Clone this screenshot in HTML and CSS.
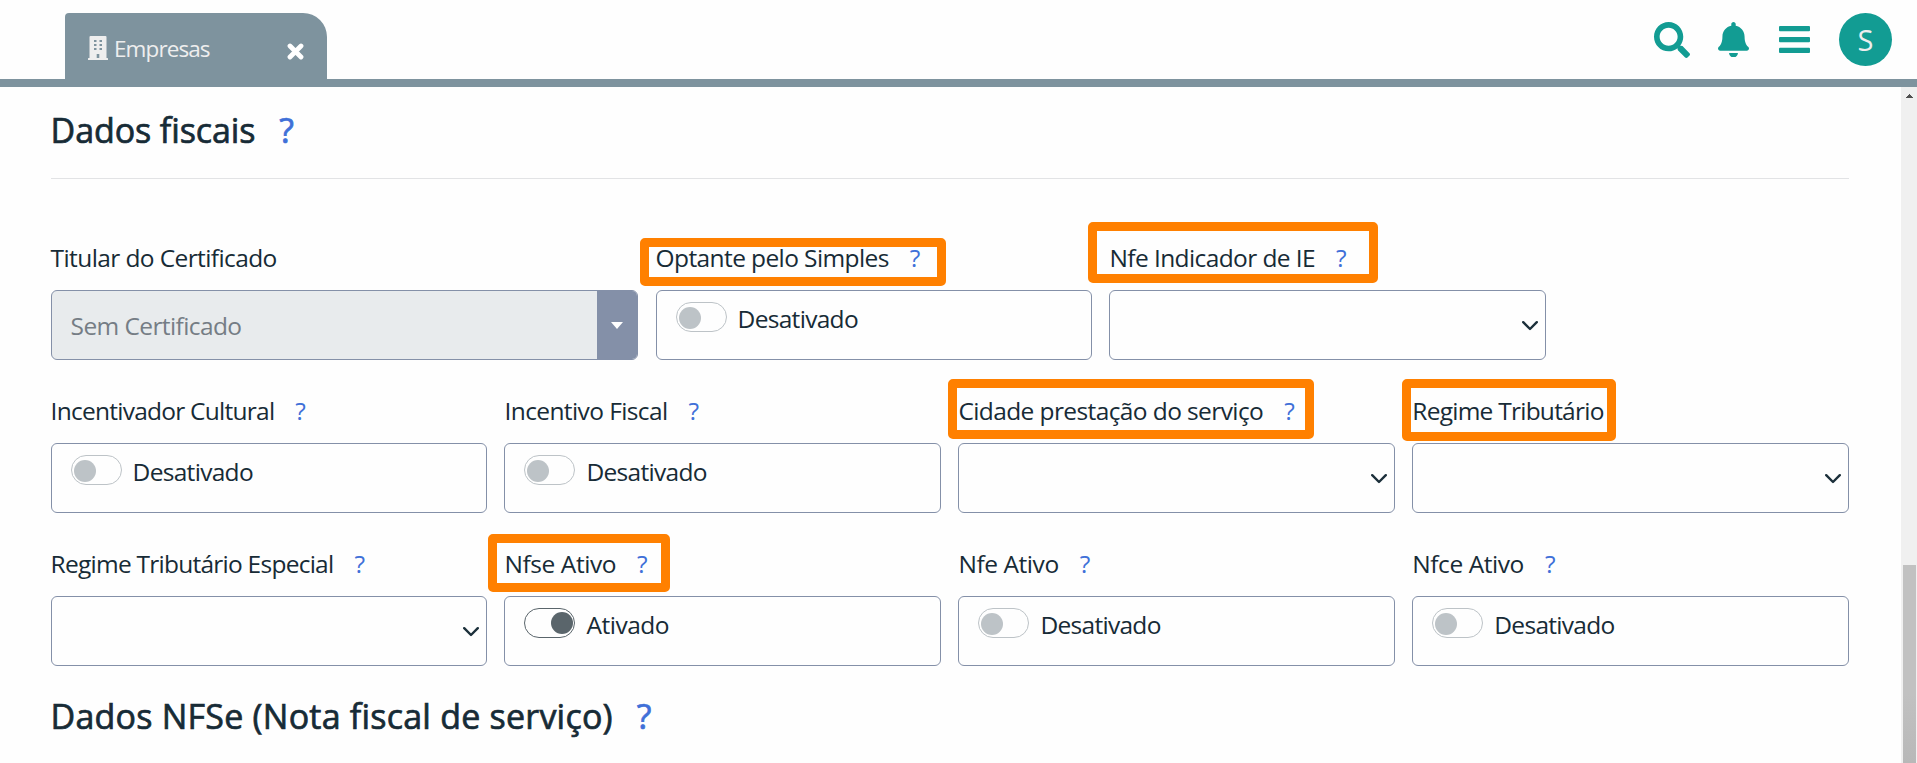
FILE: index.html
```html
<!DOCTYPE html>
<html lang="pt-BR">
<head>
<meta charset="utf-8">
<title>Empresas</title>
<link rel="stylesheet" href="styles.css">
</head>
<body>
<header class="topbar">
  <div class="tab">
    <svg class="tab-icon" viewBox="0 0 20 24"><path fill="#eee" fill-rule="evenodd" d="M1.500 1Q1.500 0 2.500 0H17.500Q18.500 0 18.500 1V22H19.500Q20 22 20 22.600V24H0V22.600Q0 22 .5 22H1.500ZM6 4v2h2.500V4ZM11.500 4v2H14V4ZM6 8v2h2.500V8ZM11.500 8v2H14V8ZM6 12v2h2.500v-2ZM11.500 12v2H14v-2ZM8.700 18v4h2.600v-4Z"/></svg>
    <span class="tab-title">Empresas</span>
    <svg class="tab-close" viewBox="0 0 17 17"><path d="M3 3L14 14M14 3L3 14" stroke="#fff" stroke-width="4.800" stroke-linecap="round"/></svg>
  </div>
  <nav class="actions">
    <svg class="ic-search" viewBox="0 0 512 512"><path fill="currentColor" d="M505 442.700L405.300 343c-4.500-4.500-10.600-7-17-7H372c27.600-35.300 44-79.700 44-128C416 93.100 322.900 0 208 0S0 93.100 0 208s93.100 208 208 208c48.300 0 92.700-16.400 128-44v16.300c0 6.400 2.500 12.500 7 17l99.700 99.700c9.400 9.400 24.600 9.400 33.900 0l28.300-28.300c9.400-9.400 9.400-24.600.1-34zM208 336c-70.700 0-128-57.200-128-128 0-70.700 57.200-128 128-128 70.700 0 128 57.200 128 128 0 70.700-57.200 128-128 128z"/></svg>
    <svg class="ic-bell" viewBox="0 0 448 512"><path fill="currentColor" d="M224 512c35.320 0 63.970-28.650 63.970-64H160.030c0 35.350 28.650 64 63.970 64zm215.390-149.710c-19.320-20.760-55.470-51.990-55.470-154.290 0-77.700-54.480-139.900-127.940-155.160V32c0-17.670-14.320-32-31.980-32s-31.980 14.330-31.980 32v20.840C118.560 68.100 64.080 130.300 64.080 208c0 102.300-36.150 133.530-55.470 154.290-6 6.450-8.660 14.160-8.610 21.710.11 16.400 12.980 32 32.100 32h383.800c19.120 0 32-15.600 32.100-32 .05-7.550-2.610-15.270-8.610-21.710z"/></svg>
    <svg class="ic-bars" viewBox="0 0 31 27"><g fill="currentColor"><rect width="31" height="5.300" rx="1"/><rect y="11" width="31" height="5.300" rx="1"/><rect y="21.800" width="31" height="5.200" rx="1"/></g></svg>
    <span class="avatar">S</span>
  </nav>
</header>
<div class="view">
  <main class="content">
    <h2 class="section-title"><span>Dados fiscais</span><span class="help">?</span></h2>
    <hr class="rule">
    <div class="row">
      <div class="field wide">
        <div class="label"><span>Titular do Certificado</span></div>
        <div class="box disabled"><span class="placeholder">Sem Certificado</span><span class="drop"><svg viewBox="0 0 12 7"><path d="M0 0H12L6 7Z" fill="#fff"/></svg></span></div>
      </div>
      <div class="field">
        <div class="label"><span>Optante pelo Simples</span><span class="help">?</span><i class="mark m-optante"></i></div>
        <div class="box"><span class="switch"></span><span class="state">Desativado</span></div>
      </div>
      <div class="field">
        <div class="label"><span>Nfe Indicador de IE</span><span class="help">?</span><i class="mark m-ie"></i></div>
        <div class="box select"><svg viewBox="0 0 16 10"><path d="M1.200 1.200L8 8L14.800 1.200"/></svg></div>
      </div>
    </div>
    <div class="row">
      <div class="field">
        <div class="label tight"><span>Incentivador Cultural</span><span class="help">?</span></div>
        <div class="box"><span class="switch"></span><span class="state">Desativado</span></div>
      </div>
      <div class="field">
        <div class="label"><span>Incentivo Fiscal</span><span class="help">?</span></div>
        <div class="box"><span class="switch"></span><span class="state">Desativado</span></div>
      </div>
      <div class="field">
        <div class="label"><span>Cidade prestação do serviço</span><span class="help">?</span><i class="mark m-cidade"></i></div>
        <div class="box select"><svg viewBox="0 0 16 10"><path d="M1.200 1.200L8 8L14.800 1.200"/></svg></div>
      </div>
      <div class="field">
        <div class="label tight"><span>Regime Tributário</span><i class="mark m-regime"></i></div>
        <div class="box select"><svg viewBox="0 0 16 10"><path d="M1.200 1.200L8 8L14.800 1.200"/></svg></div>
      </div>
    </div>
    <div class="row">
      <div class="field">
        <div class="label tight"><span>Regime Tributário Especial</span><span class="help">?</span></div>
        <div class="box select"><svg viewBox="0 0 16 10"><path d="M1.200 1.200L8 8L14.800 1.200"/></svg></div>
      </div>
      <div class="field">
        <div class="label loose"><span>Nfse Ativo</span><span class="help">?</span><i class="mark m-nfse"></i></div>
        <div class="box"><span class="switch on"></span><span class="state on">Ativado</span></div>
      </div>
      <div class="field">
        <div class="label loose"><span>Nfe Ativo</span><span class="help">?</span></div>
        <div class="box"><span class="switch"></span><span class="state">Desativado</span></div>
      </div>
      <div class="field">
        <div class="label loose"><span>Nfce Ativo</span><span class="help">?</span></div>
        <div class="box"><span class="switch"></span><span class="state">Desativado</span></div>
      </div>
    </div>
    <h2 class="section-title second"><span>Dados NFSe (Nota fiscal de serviço)</span><span class="help">?</span></h2>
  </main>
  <aside class="scrollbar"><svg class="up" viewBox="0 0 7 4"><path d="M3 0H4V1H5V2H6V3H7V4H0V3H1V2H2V1H3Z" fill="#505050"/></svg><div class="thumb"></div></aside>
</div>
</body>
</html>
```
FILE: styles.css
```css
* { box-sizing: border-box; }
body {
  margin: 0;
  height: 763px;
  overflow: hidden;
  background: #fefefe;
  color: #172b36;
  font-family: "Open Sans", "Noto Sans", sans-serif;
}
.topbar {
  height: 87px;
  padding: 13px 25px 0 65px;
  border-bottom: 8px solid #7e939e;
  display: flex;
  justify-content: space-between;
}
.tab {
  width: 262px;
  height: 66px;
  padding: 0 23px;
  border-radius: 4px 24px 0 0;
  background: #7e939e;
  display: flex;
  align-items: center;
}
.tab-icon { width: 20px; height: 24px; margin-top: 4px; }
.tab-title {
  flex: 1;
  margin: 6px 0 0 6px;
  color: #eee;
  font-size: 22.500px;
  letter-spacing: -0.9px;
  line-height: 30px;
}
.tab-close { width: 17px; height: 17px; margin-top: 10px; fill: none; }
.actions { height: 53px; display: flex; align-items: center; color: #129c93; }
.ic-search { width: 36px; height: 36px; margin-right: 28px; }
.ic-bell { width: 31px; height: 35.500px; margin-right: 30px; }
.ic-bars { width: 31px; height: 27px; margin-right: 29px; }
.avatar {
  width: 53px;
  height: 53px;
  border-radius: 50%;
  background: #129c93;
  color: #eee;
  font-size: 29px;
  line-height: 54px;
  text-align: center;
}
.view { height: 676px; display: flex; justify-content: space-between; }
.content { width: 1849px; padding-left: 50.600px; }
.section-title {
  margin: 0;
  padding-top: 19px;
  height: 91px;
  display: flex;
  font-size: 34px;
  font-weight: 400;
  line-height: 48px;
  letter-spacing: -0.1px;
  -webkit-text-stroke: 0.700px currentColor;
}
.section-title .help { margin-left: 24px; }
.section-title.second { padding-top: 2px; letter-spacing: 0.220px; }
.help { color: #4070d8; }
.rule { height: 1px; margin: 0 0 52px; border: 0; background: #e2e3e5; }
.row { display: flex; gap: 17.500px; height: 153px; }
.field { width: 436.400px; flex: none; }
.field.wide { width: 587.500px; }
.label {
  position: relative;
  height: 59px;
  padding-top: 10px;
  display: flex;
  font-size: 24.500px;
  line-height: 34px;
  letter-spacing: -0.600px;
  white-space: nowrap;
}
.label.tight { letter-spacing: -0.750px; }
.label.loose { letter-spacing: -0.430px; }
.label .help { margin-left: 21px; }
.box {
  height: 70px;
  padding: 11px 19px 0;
  border: 1px solid #8490a8;
  border-radius: 6px;
  display: flex;
  font-size: 24.500px;
  line-height: 34px;
  letter-spacing: -0.700px;
}
.state { margin-left: 11px; }
.state.on { letter-spacing: -0.500px; }
.switch {
  width: 51px;
  height: 30px;
  padding: 4px 2px;
  border: 1px solid #bdc3c7;
  border-radius: 15px;
  display: flex;
}
.switch::before {
  content: "";
  width: 22px;
  height: 22px;
  border-radius: 50%;
  background: #bdc3c7;
}
.switch.on { justify-content: flex-end; padding: 3px 1px; border-color: #5a656b; }
.switch.on::before { background: #5a656b; }
.select { padding: 0 7px 0 0; justify-content: flex-end; align-items: center; }
.select svg { width: 16px; height: 10px; margin-top: 2px; fill: none; stroke: #1c303b; stroke-width: 2.400; stroke-linecap: round; stroke-linejoin: round; }
.disabled { padding: 0 0 0 19px; background: #e8ebed; color: #757d85; overflow: hidden; letter-spacing: -0.600px; }
.placeholder { flex: 1; padding-top: 18px; }
.drop { width: 40.500px; background: #8490a8; display: flex; justify-content: center; align-items: center; }
.drop svg { width: 12px; height: 7px; }
.mark { position: absolute; border: 9px solid #ff8000; border-radius: 5px; }
.m-optante { left: -15.700px; top: 7px; width: 306px; height: 48px; }
.m-ie { left: -21.600px; top: -9px; width: 290px; height: 61px; }
.m-cidade { left: -10.500px; top: -5px; width: 366px; height: 60px; }
.m-regime { left: -10.300px; top: -5px; width: 214px; height: 62px; }
.m-nfse { left: -16.500px; top: -3px; width: 182px; height: 58px; }
.scrollbar { width: 16px; background: #f0f0f0; display: flex; flex-direction: column; }
.up { width: 7px; height: 4px; margin: 7px 0 467px 5px; }
.thumb { flex: 1; margin: 0 1px 0 2px; background: linear-gradient(#c1c1c1 65%, #b8b8b8); }
```
